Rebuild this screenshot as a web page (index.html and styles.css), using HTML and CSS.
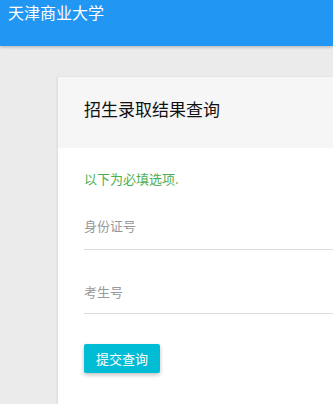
FILE: index.html
```html
<!doctype html>
<html>
  <head>
    <title>天津商业大学</title>
    <link rel="stylesheet" href="styles.css">
  </head>
  <body>
    <header class="topbar">
      <span class="brand">天津商业大学</span>
    </header>
    <main class="page">
      <div class="card">
        <div class="card-head">招生录取结果查询</div>
        <form class="card-body">
          <p class="hint">以下为必填选项.</p>
          <label class="field">
            <input type="text" placeholder="身份证号" />
          </label>
          <label class="field">
            <input type="text" placeholder="考生号" />
          </label>
          <button type="submit" class="submit-btn">提交查询</button>
        </form>
      </div>
    </main>
  </body>
</html>
```

FILE: styles.css
```css
html, body {
  margin: 0;
  height: 100%;
  overflow: hidden;
  background: #ebebeb;
  font-family: "Noto Sans CJK SC", "Noto Sans", sans-serif;
}
.topbar {
  height: 46px;
  background: #2196f3;
  color: #fff;
  padding: 0 8px;
  box-shadow: 0 1px 3px rgba(0, 0, 0, 0.25);
  position: relative;
}
.brand {
  display: block;
  font-size: 16px;
  line-height: 24px;
}
.page {
  padding: 31px 0 0 58px;
}
.card {
  background: #fff;
  box-shadow: -1px 0 2px rgba(0, 0, 0, 0.08);
  min-height: 327px;
}
.card-head {
  height: 71px;
  box-sizing: border-box;
  padding: 0 26px 8px;
  background: #f6f6f6;
  font-size: 17px;
  color: #111;
  display: flex;
  align-items: center;
}
.card-body {
  padding: 0 0 0 26px;
  display: flex;
  flex-direction: column;
  align-items: flex-start;
}
.hint {
  margin: 22px 0 24px;
  font-size: 13px;
  line-height: 18px;
  color: #4caf50;
}
.field {
  display: block;
  align-self: stretch;
  margin-bottom: 26px;
}
.field input {
  display: block;
  width: 100%;
  box-sizing: border-box;
  border: 0;
  border-bottom: 1px solid #ddd;
  padding: 4px 0 13px;
  font-family: inherit;
  font-size: 13px;
  line-height: 20px;
  outline: none;
  background: transparent;
}
.field + .field input {
  padding: 6px 0 11px;
}
.field input::placeholder {
  color: #999;
}
.submit-btn {
  margin-top: 4px;
  height: 29px;
  padding: 0 12px;
  border: 0;
  border-radius: 2px;
  background: #00bcd4;
  color: #fff;
  font-family: inherit;
  font-size: 13px;
  box-shadow: 0 2px 4px rgba(0, 0, 0, 0.25);
}
```
